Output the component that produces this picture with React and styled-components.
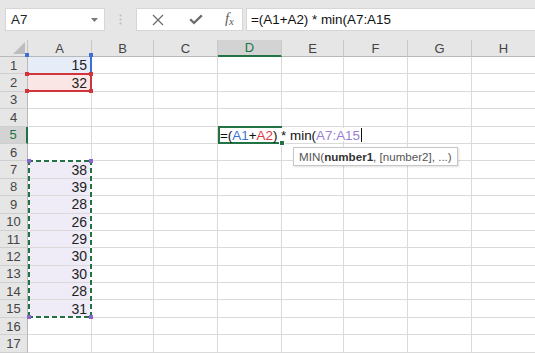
import React from 'react';
import styled, { createGlobalStyle } from 'styled-components';

const GREEN = '#217346';

const GlobalStyle = createGlobalStyle`
  html, body {
    margin: 0;
    padding: 0;
    background: #ffffff;
    overflow: hidden;
  }
  body {
    font-family: "Liberation Sans", Arial, sans-serif;
  }
`;

const columns = ['A', 'B', 'C', 'D', 'E', 'F', 'G', 'H'];
const widths = [64, 62, 64, 64, 62, 64, 64, 64];

const values = {
  1: 15, 2: 32, 7: 38, 8: 39, 9: 28, 10: 26, 11: 29, 12: 30, 13: 30, 14: 28, 15: 31,
};

const fills = {
  blue: '#e6edf8',
  red: '#fbe6e6',
  purple: '#efebf7',
};

const fillFor = (row, col) => {
  if (col !== 0) return null;
  if (row === 1) return fills.blue;
  if (row === 2) return fills.red;
  if (row >= 7 && row <= 15) return fills.purple;
  return null;
};

const App = () => (
  <>
    <GlobalStyle />
    <Window>
      <Toolbar>
        <NameBox>
          A7
          <svg width="7" height="4" viewBox="0 0 7 4">
            <path d="M0 0 L7 0 L3.5 4 Z" fill="#7a7a7a" />
          </svg>
        </NameBox>
        <Grip>
          <svg width="3" height="11" viewBox="0 0 3 11">
            <circle cx="1.5" cy="1.5" r="1" fill="#b9b9b9" />
            <circle cx="1.5" cy="5.5" r="1" fill="#b9b9b9" />
            <circle cx="1.5" cy="9.5" r="1" fill="#b9b9b9" />
          </svg>
        </Grip>
        <ButtonBox>
          <IconButton>
            <svg width="12" height="12" viewBox="0 0 12 12">
              <path d="M1 1 L11 11 M11 1 L1 11" stroke="#6e6e6e" strokeWidth="1.3" />
            </svg>
          </IconButton>
          <IconButton>
            <svg width="14" height="11" viewBox="0 0 14 11">
              <path d="M1.2 5.2 L5 9 L12.8 1.4" stroke="#6a6a6a" strokeWidth="2.3" fill="none" />
            </svg>
          </IconButton>
          <Fx>
            f<sub>x</sub>
          </Fx>
        </ButtonBox>
        <FormulaBox>=(A1+A2) * min(A7:A15</FormulaBox>
      </Toolbar>

      <Sheet>
        <Corner $r={1} $c={1}>
          <svg width="12" height="12" viewBox="0 0 12 12">
            <path d="M12 0 L12 12 L0 12 Z" fill="#bdbdbd" />
          </svg>
        </Corner>
        {columns.map((name, i) => (
          <ColHeader key={name} $r={1} $c={i + 2} $active={name === 'D'}>
            {name}
          </ColHeader>
        ))}

        {Array.from({ length: 17 }, (_, idx) => {
          const row = idx + 1;
          return (
            <React.Fragment key={row}>
              <RowHeader $r={row + 1} $c={1} $active={row === 5}>
                {row}
              </RowHeader>
              {columns.map((name, i) => (
                <Cell key={name} $r={row + 1} $c={i + 2} $fill={fillFor(row, i)}>
                  {i === 0 ? values[row] : null}
                </Cell>
              ))}
            </React.Fragment>
          );
        })}

        <RefBox $rows="2 / 3" $col={2} $color="#3b6fd6" $sides="0 2px 0 0">
          <Handle $color="#3b6fd6" $v="top" $h="left" />
          <Handle $color="#3b6fd6" $v="top" $h="right" />
        </RefBox>

        <RefBox $rows="3 / 4" $col={2} $color="#d1343b" $sides="2px 2px 2px 0">
          <Handle $color="#d1343b" $v="top" $h="left" />
          <Handle $color="#d1343b" $v="top" $h="right" />
          <Handle $color="#d1343b" $v="bottom" $h="left" />
          <Handle $color="#d1343b" $v="bottom" $h="right" />
        </RefBox>

        <MarchingRange $rows="8 / 17" $col={2}>
          <Handle $color="#8d63d4" $v="top" $h="left" />
          <Handle $color="#8d63d4" $v="top" $h="right" />
          <Handle $color="#8d63d4" $v="bottom" $h="left" />
          <Handle $color="#8d63d4" $v="bottom" $h="right" />
        </MarchingRange>

        <ActiveCell $r={6} $c={5}>
          <EditText>
            {'=('}
            <Ref $color="#3c72d4">A1</Ref>
            {'+'}
            <Ref $color="#e0393f">A2</Ref>
            {') * min('}
            <Ref $color="#9a7fd4">A7:A15</Ref>
            <Caret />
          </EditText>
          <FillHandle />
        </ActiveCell>

        <Tooltip>
          MIN(<b>number1</b>, [number2], ...)
        </Tooltip>
      </Sheet>
    </Window>
  </>
);

const Window = styled.div`
  width: 535px;
  height: 353px;
  overflow: hidden;
  background: #ffffff;
`;

const Toolbar = styled.div`
  display: flex;
  align-items: center;
  height: 40px;
  box-sizing: border-box;
  padding: 8px 0 9px 5px;
  background: #e6e6e6;
`;

const WhiteBox = styled.div`
  height: 23px;
  box-sizing: border-box;
  background: #ffffff;
  border: 1px solid #d6d6d6;
  display: flex;
  align-items: center;
`;

const NameBox = styled(WhiteBox)`
  width: 100px;
  padding: 0 6px 0 5px;
  justify-content: space-between;
  font-size: 13.4px;
  color: #222;
`;

const Grip = styled.div`
  width: 31px;
  display: flex;
  justify-content: center;
  align-items: center;
`;

const ButtonBox = styled(WhiteBox)`
  width: 107px;
  padding: 0 8px 0 11px;
  justify-content: space-between;
`;

const IconButton = styled.span`
  display: flex;
  align-items: center;
  justify-content: center;
  width: 20px;
`;

const Fx = styled.span`
  font-family: "Liberation Serif", "Times New Roman", serif;
  font-style: italic;
  font-size: 15px;
  color: #5e5e5e;
  line-height: 1;
  margin-top: -2px;

  sub {
    font-size: 11px;
    vertical-align: -2px;
  }
`;

const FormulaBox = styled(WhiteBox)`
  flex: 1;
  margin-left: 3px;
  border-right: none;
  padding-left: 4px;
  font-size: 13.4px;
  color: #111;
  white-space: nowrap;
`;

const Sheet = styled.div`
  display: grid;
  grid-template-columns: 28px ${widths.map((w) => `${w}px`).join(' ')};
  grid-template-rows: 17px repeat(17, 17.4px);
  font-size: 12.5px;
`;

const Placed = styled.div`
  grid-row: ${(p) => p.$r};
  grid-column: ${(p) => p.$c};
  box-sizing: border-box;
  min-width: 0;
`;

const Corner = styled(Placed)`
  background: #e6e6e6;
  border-right: 1px solid #c4c4c4;
  border-bottom: 1px solid #b9b9b9;
  display: flex;
  align-items: flex-end;
  justify-content: flex-end;
  padding: 0 2px 2px 0;
`;

const ColHeader = styled(Placed)`
  background: ${(p) => (p.$active ? '#d3d3d3' : '#e6e6e6')};
  color: ${(p) => (p.$active ? GREEN : '#444')};
  border-right: 1px solid #c9c9c9;
  border-bottom: ${(p) => (p.$active ? `2px solid ${GREEN}` : '1px solid #b9b9b9')};
  display: flex;
  align-items: center;
  justify-content: center;
  font-size: 13px;
`;

const RowHeader = styled(Placed)`
  background: ${(p) => (p.$active ? '#d3d3d3' : '#e6e6e6')};
  color: ${(p) => (p.$active ? GREEN : '#444')};
  border-right: ${(p) => (p.$active ? `2px solid ${GREEN}` : '1px solid #b9b9b9')};
  border-bottom: 1px solid #cfcfcf;
  display: flex;
  align-items: center;
  justify-content: center;
  font-size: 13px;
`;

const Cell = styled(Placed)`
  background: ${(p) => p.$fill || '#ffffff'};
  border-right: 1px solid #dadada;
  border-bottom: 1px solid #dadada;
  display: flex;
  align-items: center;
  justify-content: flex-end;
  padding-right: 4px;
  font-size: 14px;
  color: #222;
`;

const RefBox = styled.div`
  grid-row: ${(p) => p.$rows};
  grid-column: ${(p) => p.$col};
  position: relative;
  z-index: 2;
  box-sizing: border-box;
  border-style: solid;
  border-color: ${(p) => p.$color};
  border-width: ${(p) => p.$sides};
  margin: -1px 0 0 0;
  pointer-events: none;
`;

const dashH = `repeating-linear-gradient(90deg, ${GREEN} 0 5px, transparent 5px 8px)`;
const dashV = `repeating-linear-gradient(180deg, ${GREEN} 0 5px, transparent 5px 8px)`;

const MarchingRange = styled.div`
  grid-row: ${(p) => p.$rows};
  grid-column: ${(p) => p.$col};
  position: relative;
  z-index: 2;
  box-sizing: border-box;
  border: 2px solid #ffffff;
  margin-top: -1px;

  &::after {
    content: '';
    position: absolute;
    inset: -2px;
    background: ${dashH} top left / 100% 2px no-repeat,
      ${dashH} bottom left / 100% 2px no-repeat,
      ${dashV} top left / 2px 100% no-repeat,
      ${dashV} top right / 2px 100% no-repeat;
  }
`;

const Handle = styled.span`
  position: absolute;
  z-index: 1;
  width: 4px;
  height: 4px;
  background: ${(p) => p.$color};
  ${(p) => (p.$v === 'top' ? 'top: -3px;' : 'bottom: -3px;')}
  ${(p) => (p.$h === 'left' ? 'left: -3px;' : 'right: -3px;')}
`;

const ActiveCell = styled(Placed)`
  position: relative;
  z-index: 3;
  margin-top: -1px;
  border: 2px solid ${GREEN};
  border-right: none;
  display: flex;
  align-items: center;
`;

const EditText = styled.span`
  display: inline-block;
  height: 13px;
  line-height: 13px;
  background: #ffffff;
  white-space: nowrap;
  font-size: 13.4px;
  color: #111;
  padding-right: 3px;
`;

const Ref = styled.span`
  color: ${(p) => p.$color};
`;

const Caret = styled.span`
  display: inline-block;
  width: 1px;
  height: 14px;
  background: #111;
  margin-left: 1px;
  vertical-align: -2px;
`;

const FillHandle = styled.span`
  position: absolute;
  right: -3px;
  bottom: -4px;
  width: 4px;
  height: 4px;
  background: ${GREEN};
  border: 1px solid #ffffff;
`;

const Tooltip = styled.div`
  grid-row: 7;
  grid-column: 6 / 9;
  align-self: start;
  justify-self: start;
  position: relative;
  z-index: 4;
  margin: 3px 0 0 11px;
  height: 19px;
  box-sizing: border-box;
  padding: 0 5px;
  display: flex;
  align-items: center;
  background: #ffffff;
  border: 1px solid #c6c6c6;
  box-shadow: 1px 1px 2px rgba(0, 0, 0, 0.12);
  font-size: 11.6px;
  color: #555;
  white-space: nowrap;

  b {
    color: #333;
  }
`;

export default App;
